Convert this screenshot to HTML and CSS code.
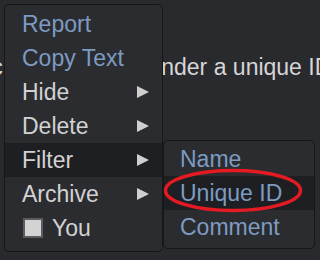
FILE: index.html
```html
<!DOCTYPE html>
<html lang="en">
<head>
    <meta charset="UTF-8">
    <meta name="viewport" content="width=device-width, initial-scale=1.0">
    <title>Context Menu</title>
    <link rel="stylesheet" href="styles.css">
</head>
<body>
    <p class="post-text">Topic posts are put under a unique ID.</p>

    <ul class="menu context-menu">
        <li class="menu-item link">Report</li>
        <li class="menu-item link">Copy Text</li>
        <li class="menu-item">Hide <span class="arrow"></span></li>
        <li class="menu-item">Delete <span class="arrow"></span></li>
        <li class="menu-item active">Filter <span class="arrow"></span></li>
        <li class="menu-item">Archive <span class="arrow"></span></li>
        <li class="menu-item"><span class="check"></span>You</li>
    </ul>

    <ul class="menu submenu">
        <li class="menu-item link">Name</li>
        <li class="menu-item link active">Unique ID</li>
        <li class="menu-item link">Comment</li>
    </ul>

    <svg class="mark" width="320" height="260" viewBox="0 0 320 260">
        <ellipse cx="233" cy="190.5" rx="67.5" ry="20" fill="none" stroke="#e41b23" stroke-width="3.5"/>
    </svg>
</body>
</html>
```

FILE: styles.css
```css
body {
    font-family: 'Liberation Sans', Arial, sans-serif;
    margin: 0;
    padding: 0;
    background-color: #292a2e;
    color: #d4d4d4;
    width: 320px;
    height: 260px;
    overflow: hidden;
    position: relative;
}

.post-text {
    margin: 54px 0 0 0;
    font-size: 23px;
    line-height: 26px;
    white-space: nowrap;
    text-indent: -51px;
    color: #d6d6d6;
}

.menu {
    position: absolute;
    list-style: none;
    margin: 0;
    background: #2b2c30;
    border: 1px solid #161719;
    border-radius: 5px;
    font-size: 23px;
    box-sizing: border-box;
}

.context-menu {
    left: 4px;
    top: 4px;
    width: 159px;
    height: 248px;
    padding: 2px 0 6px 0;
}

.submenu {
    left: 163px;
    top: 140px;
    width: 152px;
    height: 109px;
    padding: 1px 0 4px 0;
}

.menu-item {
    height: 34px;
    display: flex;
    align-items: center;
    justify-content: space-between;
    padding: 0 13px 0 17px;
    color: #d2d2d2;
}

.submenu .menu-item {
    padding-left: 16px;
}

.menu-item.link {
    color: #7d9bc1;
}

.menu-item.active {
    background: #1e1f23;
}

.arrow {
    width: 0;
    height: 0;
    border-left: 12px solid #cfcfcf;
    border-top: 6px solid transparent;
    border-bottom: 6px solid transparent;
}

.menu-item:last-child {
    justify-content: flex-start;
}

.check {
    width: 20px;
    height: 20px;
    box-sizing: border-box;
    border: 2px solid #5c5c5e;
    background: #d3d3d3;
    margin: 0 9px 0 1px;
}

.mark {
    position: absolute;
    left: 0;
    top: 0;
}
```
